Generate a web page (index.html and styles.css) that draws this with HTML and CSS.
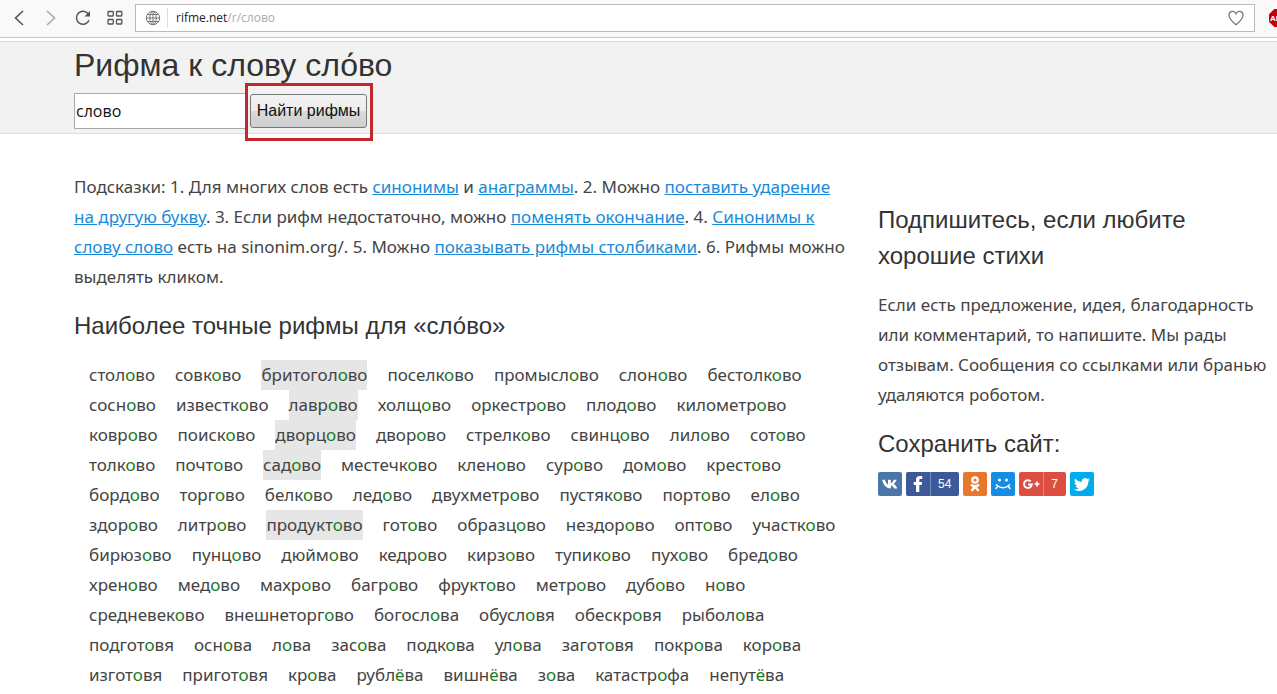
FILE: index.html
```html
<!DOCTYPE html>
<html lang="ru">
<head>
<meta charset="utf-8">
<title>Рифма к слову слово</title>
<link rel="stylesheet" href="styles.css">
</head>
<body>
<nav class="toolbar" aria-label="Браузер">
  <button class="tool" aria-label="Назад"><svg width="20" height="20" viewBox="0 0 20 20"><path d="M14 3 6.500 10l7.500 7" fill="none" stroke="#555" stroke-width="1.600"/></svg></button>
  <button class="tool" aria-label="Вперёд"><svg width="20" height="20" viewBox="0 0 20 20"><path d="m6 3 7.500 7L6 17" fill="none" stroke="#aaa" stroke-width="1.600"/></svg></button>
  <button class="tool" aria-label="Обновить"><svg width="20" height="20" viewBox="0 0 20 20"><path d="M16 12.200A6.500 6.500 0 1 1 15.300 6" fill="none" stroke="#555" stroke-width="1.500"/><path d="M17 3v5.500h-5.500z" fill="#555"/></svg></button>
  <button class="tool" aria-label="Экспресс-панель"><svg width="20" height="20" viewBox="0 0 20 20" fill="none" stroke="#555" stroke-width="1.300"><rect x="3" y="3.500" width="5.300" height="4.500" rx=".7"/><rect x="11.500" y="3.500" width="5.300" height="4.500" rx=".7"/><rect x="3" y="11.500" width="5.300" height="4.500" rx=".7"/><rect x="11.500" y="11.500" width="5.300" height="4.500" rx=".7"/></svg></button>
  <div class="address">
    <svg class="globe" width="16" height="16" viewBox="0 0 16 16" fill="none" stroke="#777"><circle cx="8" cy="8" r="6.700"/><ellipse cx="8" cy="8" rx="3.200" ry="6.700"/><path d="M8 1.300v13.400M1.300 8h13.400M2.500 4.500h11M2.500 11.500h11"/></svg>
    <span class="url">rifme.net<span class="path">/r/слово</span></span>
    <button class="heart" aria-label="В закладки"><svg width="18" height="18" viewBox="0 0 18 18"><path d="M9 15.800C6 13 2 10.200 2 6.200 2 1.700 7.500 1 9 4.900 10.500 1 16 1.700 16 6.200c0 4-4 6.800-7 9.600z" fill="none" stroke="#777" stroke-width="1.200"/></svg></button>
  </div>
  <button class="adblock" aria-label="AdBlock"><svg width="18" height="18" viewBox="0 0 18 18"><path d="M5.300 0h7.400L18 5.300v7.400L12.700 18H5.300L0 12.700V5.300z" fill="#c4000e"/><text x="1" y="12" class="abp">ABP</text></svg></button>
</nav>

<header class="header">
  <h1 class="title">Рифма к слову сло&#769;во</h1>
  <form class="search">
    <input class="query" type="text" value="слово" aria-label="Слово">
    <span class="frame"><button class="submit" type="button">Найти рифмы</button></span>
  </form>
</header>

<div class="layout">
  <main class="main">
    <p class="hints">Подсказки: 1. Для многих слов есть <a href="#">синонимы</a> и <a href="#">анаграммы</a>. 2. Можно <a href="#">поставить ударение<br>на другую букву</a>. 3. Если рифм недостаточно, можно <a href="#">поменять окончание</a>. 4. <a href="#">Синонимы к<br>слову слово</a> есть на sinonim.org/. 5. Можно <a href="#">показывать рифмы столбиками</a>. 6. Рифмы можно<br>выделять кликом.</p>
    <h2 class="heading">Наиболее точные рифмы для «сло&#769;во»</h2>
    <div class="rhymes">
      <div class="row"><span>стол<b>о</b>во</span><span>совк<b>о</b>во</span><span class="marked">бритогол<b>о</b>во</span><span>поселк<b>о</b>во</span><span>промысл<b>о</b>во</span><span>слон<b>о</b>во</span><span>бестолк<b>о</b>во</span></div>
      <div class="row"><span>сосн<b>о</b>во</span><span>известк<b>о</b>во</span><span class="marked">лавр<b>о</b>во</span><span>холщ<b>о</b>во</span><span>оркестр<b>о</b>во</span><span>плод<b>о</b>во</span><span>километр<b>о</b>во</span></div>
      <div class="row"><span>ковр<b>о</b>во</span><span>поиск<b>о</b>во</span><span class="marked">дворц<b>о</b>во</span><span>двор<b>о</b>во</span><span>стрелк<b>о</b>во</span><span>свинц<b>о</b>во</span><span>лил<b>о</b>во</span><span>сот<b>о</b>во</span></div>
      <div class="row"><span>толк<b>о</b>во</span><span>почт<b>о</b>во</span><span class="marked">сад<b>о</b>во</span><span>местечк<b>о</b>во</span><span>клен<b>о</b>во</span><span>сур<b>о</b>во</span><span>дом<b>о</b>во</span><span>крест<b>о</b>во</span></div>
      <div class="row"><span>борд<b>о</b>во</span><span>торг<b>о</b>во</span><span>белк<b>о</b>во</span><span>лед<b>о</b>во</span><span>двухметр<b>о</b>во</span><span>пустяк<b>о</b>во</span><span>порт<b>о</b>во</span><span>ел<b>о</b>во</span></div>
      <div class="row"><span>здор<b>о</b>во</span><span>литр<b>о</b>во</span><span class="marked">продукт<b>о</b>во</span><span>гот<b>о</b>во</span><span>образц<b>о</b>во</span><span>нездор<b>о</b>во</span><span>опт<b>о</b>во</span><span>участк<b>о</b>во</span></div>
      <div class="row"><span>бирюз<b>о</b>во</span><span>пунц<b>о</b>во</span><span>дюйм<b>о</b>во</span><span>кедр<b>о</b>во</span><span>кирз<b>о</b>во</span><span>тупик<b>о</b>во</span><span>пух<b>о</b>во</span><span>бред<b>о</b>во</span></div>
      <div class="row"><span>хрен<b>о</b>во</span><span>мед<b>о</b>во</span><span>махр<b>о</b>во</span><span>багр<b>о</b>во</span><span>фрукт<b>о</b>во</span><span>метр<b>о</b>во</span><span>дуб<b>о</b>во</span><span>н<b>о</b>во</span></div>
      <div class="row"><span>средневек<b>о</b>во</span><span>внешнеторг<b>о</b>во</span><span>богосл<b>о</b>ва</span><span>обусл<b>о</b>вя</span><span>обескр<b>о</b>вя</span><span>рыбол<b>о</b>ва</span></div>
      <div class="row"><span>подгот<b>о</b>вя</span><span>осн<b>о</b>ва</span><span>л<b>о</b>ва</span><span>зас<b>о</b>ва</span><span>подк<b>о</b>ва</span><span>ул<b>о</b>ва</span><span>загот<b>о</b>вя</span><span>покр<b>о</b>ва</span><span>кор<b>о</b>ва</span></div>
      <div class="row"><span>изгот<b>о</b>вя</span><span>пригот<b>о</b>вя</span><span>кр<b>о</b>ва</span><span>рубл<b>ё</b>ва</span><span>вишн<b>ё</b>ва</span><span>з<b>о</b>ва</span><span>катастр<b>о</b>фа</span><span>непут<b>ё</b>ва</span></div>
    </div>
  </main>

  <aside class="side">
    <h2 class="heading">Подпишитесь, если любите хорошие стихи</h2>
    <p class="note">Если есть предложение, идея, благодарность или комментарий, то напишите. Мы рады отзывам. Сообщения со ссылками или бранью удаляются роботом.</p>
    <h2 class="heading">Сохранить сайт:</h2>
    <div class="share">
      <a href="#" class="vk" aria-label="ВКонтакте"><svg width="24" height="24" viewBox="0 0 24 24"><path fill="#fff" d="M12.900 16.500C7.400 16.500 5.300 12 4 7.800h2.900c.8 2.600 1.900 4 3.100 4.700V7.800h2.800v3.400c1.200-.5 2.200-1.700 2.900-3.400h2.900c-.5 1.800-1.500 3.100-2.900 4.100 1.600.9 2.900 2.400 3.600 4.600h-3.100c-.6-1.500-1.700-2.600-3.400-3z"/></svg></a>
      <a href="#" class="fb" aria-label="Facebook"><svg width="24" height="24" viewBox="0 0 24 24"><path fill="#fff" d="M10 20v-7H7.700V9.900H10V7.700C10 5.200 11.500 4 13.700 4h2.500v3h-1.600c-1 0-1.300.5-1.300 1.300v1.600h2.800l-.4 3.100h-2.400v7z"/></svg><span class="count">54</span></a>
      <a href="#" class="ok" aria-label="Одноклассники"><svg width="24" height="24" viewBox="0 0 24 24" fill="none" stroke="#fff" stroke-linecap="round"><circle cx="12" cy="8" r="2.700" stroke-width="2.200"/><path d="M8.700 13.200q3.300 2 6.600 0M12 14.600l-3 3.600M12 14.600l3 3.600" stroke-width="2.300"/></svg></a>
      <a href="#" class="mm" aria-label="Мой Мир"><svg width="24" height="24" viewBox="0 0 24 24"><circle cx="8.500" cy="8" r="1.500" fill="#fff"/><circle cx="15.500" cy="8" r="1.500" fill="#fff"/><path d="M5 16.500 7 14q5 3.600 10 0l2 2.500M7 14l-1.500-1.200M17 14l1.500-1.200" fill="none" stroke="#fff" stroke-width="1.500" stroke-linecap="round"/></svg></a>
      <a href="#" class="gp" aria-label="Google+"><svg width="24" height="24" viewBox="0 0 24 24" fill="none" stroke="#fff"><path d="M11.800 9.400A3.900 3.900 0 1 0 12.800 12.600H9" stroke-width="2"/><path d="M15.500 12h5M18 9.500v5" stroke-width="1.700"/></svg><span class="count">7</span></a>
      <a href="#" class="tw" aria-label="Twitter"><svg width="24" height="24" viewBox="0 0 24 24"><path fill="#fff" d="M20 7.500c-.6.300-1.200.4-1.900.5.700-.4 1.200-1 1.400-1.800-.6.400-1.300.6-2.100.8a3.300 3.300 0 0 0-5.600 3c-2.700-.1-5.100-1.400-6.700-3.400-.9 1.500-.5 3.400 1 4.400-.5 0-1-.2-1.500-.4 0 1.600 1.100 2.900 2.600 3.200-.5.100-1 .2-1.500.1.400 1.300 1.600 2.200 3.100 2.300A6.600 6.600 0 0 1 4 17.500c6.600 4 14.600-.5 14.400-8.400.6-.4 1.200-1 1.600-1.600z"/></svg></a>
    </div>
  </aside>
</div>
</body>
</html>
```
FILE: styles.css
```css
* {
  box-sizing: border-box;
}

body {
  margin: 0;
  background: #fff;
  color: #444;
  font: 17px/30px "Noto Sans", Tahoma, sans-serif;
}

button {
  border: 0;
  padding: 0;
  background: none;
  font: inherit;
}

svg {
  display: block;
}

h1, h2, p {
  margin: 0;
}

h1, h2 {
  color: #333;
  font-family: "Liberation Sans", Arial, sans-serif;
  font-weight: 400;
}

a {
  color: #1a8ad8;
}

.toolbar {
  display: flex;
  align-items: center;
  gap: 12px;
  height: 38px;
  padding: 0 0 2px 9px;
  overflow: hidden;
  border-bottom: 1px solid #c8c8c8;
  background: #f9f9f9;
}

.tool,
.adblock {
  flex: none;
}

.address {
  flex: 1;
  display: flex;
  align-items: center;
  gap: 6px;
  height: 28px;
  margin: 0 2px 0 -2px;
  padding: 0 9px;
  border: 1px solid #bbb;
  background: #fff;
  font: 12px/20px "Open Sans", sans-serif;
  color: #222;
}

.url {
  flex: 1;
  padding-left: 8px;
  border-left: 1px solid #ddd;
}

.path {
  color: #aaa;
}

.adblock {
  width: 8px;
  overflow: hidden;
}

.abp {
  fill: #fff;
  font: bold 8px "Liberation Sans", sans-serif;
}

.header {
  margin-top: 3px;
  height: 93px;
  padding-left: 74px;
  border-top: 1px solid #ddd;
  border-bottom: 1px solid #ddd;
  background: #f2f2f2;
}

.title {
  font-size: 32px;
  line-height: 46px;
}

.search {
  display: flex;
  align-items: flex-start;
  margin-top: -5px;
}

.query {
  width: 171px;
  height: 36px;
  margin-top: 10px;
  padding: 0 1px;
  border: 1px solid #aaa;
  border-right: 0;
  background: #fff;
  color: #111;
  font: 16px "Open Sans", sans-serif;
}

.frame {
  display: flex;
  padding: 8px 3px 10px 2px;
  border: 3px solid #c1272d;
}

.submit {
  width: 117px;
  height: 34px;
  border: 1px solid #777;
  border-radius: 3px;
  background: linear-gradient(#f3f3f3 0%, #ebebeb 50%, #dadada 51%, #cecece 100%);
  color: #111;
  font: 16px "Liberation Sans", Arial, sans-serif;
}

.layout {
  display: grid;
  grid-template-columns: minmax(0, 1fr) 390px;
  gap: 22px;
  padding: 38px 9px 0 74px;
}

.heading {
  font-size: 24px;
  line-height: 36px;
}

.main .heading {
  margin: 16px 0;
}

.rhymes {
  padding-left: 15px;
}

.row {
  display: flex;
  gap: 20px;
  white-space: nowrap;
}

.row b {
  color: #1b7a1b;
  font-weight: 400;
}

.marked {
  background: #e6e6e6;
}

.side {
  padding-top: 30px;
}

.note {
  margin: 16px 0;
}

.share {
  display: flex;
  gap: 4px;
  margin-top: 10px;
}

.share a {
  display: flex;
  align-items: center;
  height: 24px;
  border-radius: 2px;
  color: #fff;
  text-decoration: none;
}

.count {
  padding: 0 8px 0 7px;
  border-left: 1px solid rgba(255, 255, 255, 0.3);
  font: 12px/24px "Liberation Sans", Arial, sans-serif;
}

.vk { background: #4a76a8; }
.fb { background: #3c5a99; }
.ok { background: #e8772e; }
.mm { background: #168de2; }
.gp { background: #dc4e41; }
.tw { background: #00aced; }
```
